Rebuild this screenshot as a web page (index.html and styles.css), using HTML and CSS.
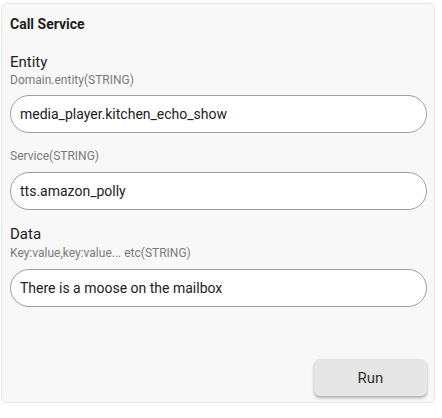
FILE: index.html
```html
<!DOCTYPE html>
<html lang="en">
<head>
    <meta charset="UTF-8">
    <meta name="viewport" content="width=device-width, initial-scale=1.0">
    <title>Call Service</title>
    <link rel="stylesheet" href="styles.css">
</head>
<body>
    <div class="card">
        <h3 class="card-title">Call Service</h3>

        <div class="field field-entity">
            <div class="label">Entity</div>
            <div class="hint">Domain.entity(STRING)</div>
            <input class="text-input" type="text" value="media_player.kitchen_echo_show">
        </div>

        <div class="field field-service">
            <div class="hint">Service(STRING)</div>
            <input class="text-input" type="text" value="tts.amazon_polly">
        </div>

        <div class="field field-data">
            <div class="label">Data</div>
            <div class="hint">Key:value,key:value... etc(STRING)</div>
            <input class="text-input" type="text" value="There is a moose on the mailbox">
        </div>

        <div class="actions">
            <button class="run-button">Run</button>
        </div>
    </div>
</body>
</html>
```

FILE: styles.css
```css
body { margin: 0; font-family: Roboto, "Liberation Sans", sans-serif; background: #fff; color: #212121; }
.card { margin: 3px 0 0 1px; width: 434px; height: 400px; box-sizing: border-box; padding: 0 7px 0 8px; background: #f8f8f8; border: 1px solid #e6e6e6; border-radius: 5px; display: flex; flex-direction: column; }
.card-title { margin: 12px 0 0 0; font-size: 14px; font-weight: 700; line-height: 16px; color: #1c1c1c; }
.field { display: flex; flex-direction: column; }
.label { font-size: 15px; line-height: 18px; color: #222; }
.hint { font-size: 12px; line-height: 14px; color: #7a7a7a; margin-top: 2px; }
.field-entity .label { margin-top: 21px; }
.field-service .hint { margin-top: 16px; }
.field-data .label { margin-top: 15px; }
.field-data .hint { margin-top: 3px; }
.text-input { margin-top: 8px; height: 38px; box-sizing: border-box; width: 100%; padding: 0 9px; border: 1px solid #9e9e9e; border-radius: 19px; background: #fff; font-family: inherit; font-size: 14px; color: #212121; outline: none; }
.field-service .text-input, .field-data .text-input { margin-top: 9px; }
.actions { margin-top: auto; margin-bottom: 6px; display: flex; justify-content: flex-end; }
.run-button { width: 113px; height: 37px; border: none; border-radius: 6px; background: #e6e6e6; font-family: Roboto, "Liberation Sans", sans-serif; font-size: 15px; color: #333; box-shadow: 0 2px 3px rgba(0, 0, 0, 0.3); cursor: pointer; }
```
